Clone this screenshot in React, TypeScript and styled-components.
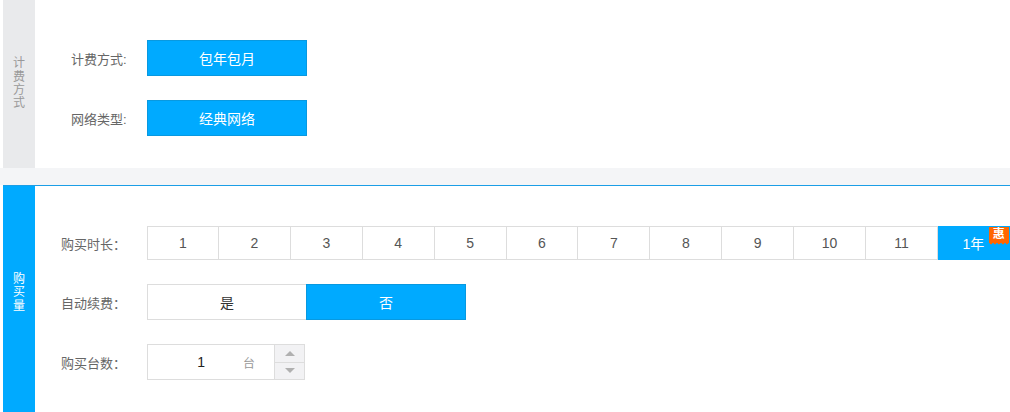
import React from 'react';
import styled, { createGlobalStyle } from 'styled-components';

const GlobalStyle = createGlobalStyle`
  html, body {
    margin: 0;
    padding: 0;
    background: #fff;
  }
  body {
    font-family: "Liberation Sans", "Noto Sans CJK SC", sans-serif;
    color: #666;
  }
`;

const months = ['1', '2', '3', '4', '5', '6', '7', '8', '9', '10', '11'];

const App = () => {
  return (
    <Page>
      <GlobalStyle />
      <Section>
        <Sidebar tone="gray">
          <SideText>计费方式</SideText>
        </Sidebar>
        <Body pad="40px 0 32px 36px">
          <Row>
            <Label>计费方式:</Label>
            <PrimaryButton>包年包月</PrimaryButton>
          </Row>
          <Row>
            <Label>网络类型:</Label>
            <PrimaryButton>经典网络</PrimaryButton>
          </Row>
        </Body>
      </Section>

      <Band />

      <Section accent>
        <Sidebar tone="blue">
          <SideText offset={87}>购买量</SideText>
        </Sidebar>
        <Body pad="40px 0 32px 26px">
          <Row>
            <Label wide>购买时长：</Label>
            <CellGroup>
              {months.map((m) => (
                <Cell key={m}>{m}</Cell>
              ))}
              <Cell active>
                1年
                <Badge>惠</Badge>
              </Cell>
            </CellGroup>
          </Row>
          <Row>
            <Label wide>自动续费：</Label>
            <CellGroup>
              <Toggle>是</Toggle>
              <Toggle active>否</Toggle>
            </CellGroup>
          </Row>
          <Row>
            <Label wide>购买台数：</Label>
            <InputBox>
              <Value>1</Value>
              <Unit>台</Unit>
              <Spinner>
                <SpinHalf>
                  <Arrow dir="up" />
                </SpinHalf>
                <SpinHalf>
                  <Arrow dir="down" />
                </SpinHalf>
              </Spinner>
            </InputBox>
          </Row>
        </Body>
      </Section>
    </Page>
  );
};

const Page = styled.div`
  width: 1010px;
  height: 412px;
  overflow: hidden;
`;

const Section = styled.div<{ accent?: boolean }>`
  display: flex;
  margin-left: 3px;
  border-top: ${(p) => (p.accent ? '1px solid #1b9ee6' : 'none')};
  min-height: ${(p) => (p.accent ? '240px' : '0')};
`;

const Sidebar = styled.div<{ tone: 'gray' | 'blue' }>`
  width: 32px;
  flex-shrink: 0;
  display: flex;
  justify-content: center;
  background: ${(p) => (p.tone === 'blue' ? '#00aaff' : '#e9eaec')};
  color: ${(p) => (p.tone === 'blue' ? '#fff' : '#999')};
`;

const SideText = styled.div<{ offset?: number }>`
  width: 12px;
  font-size: 12px;
  line-height: 13.3px;
  word-break: break-all;
  text-align: center;
  align-self: ${(p) => (p.offset ? 'flex-start' : 'center')};
  margin-top: ${(p) => (p.offset ? `${p.offset}px` : '0')};
`;

const Body = styled.div<{ pad: string }>`
  flex: 1;
  display: flex;
  flex-direction: column;
  gap: 24px;
  padding: ${(p) => p.pad};
`;

const Row = styled.div`
  display: flex;
  align-items: center;
`;

const Label = styled.div<{ wide?: boolean }>`
  width: ${(p) => (p.wide ? '86px' : '76px')};
  font-size: 13px;
  color: #666;
  white-space: nowrap;
`;

const PrimaryButton = styled.div`
  box-sizing: border-box;
  width: 160px;
  height: 36px;
  display: flex;
  align-items: center;
  justify-content: center;
  background: #00aaff;
  border: 1px solid #0899e0;
  color: #fff;
  font-size: 14px;
`;

const Band = styled.div`
  height: 17px;
  background: #f4f5f7;
`;

const CellGroup = styled.div`
  display: flex;
`;

const Cell = styled.div<{ active?: boolean }>`
  position: relative;
  box-sizing: border-box;
  width: 71.9px;
  height: 34px;
  display: flex;
  align-items: center;
  justify-content: center;
  font-size: 14px;
  color: ${(p) => (p.active ? '#fff' : '#555')};
  background: ${(p) => (p.active ? '#00aaff' : '#fff')};
  border: 1px solid ${(p) => (p.active ? '#00aaff' : '#ddd')};
  border-left: none;
  &:first-child {
    width: 72px;
    border-left: 1px solid #ddd;
  }
`;

const Badge = styled.span`
  position: absolute;
  top: 0;
  right: 0;
  width: 20px;
  height: 16px;
  background: #ff6600;
  color: #fff;
  font-size: 12px;
  line-height: 15px;
  text-align: center;
  font-weight: bold;
  &::after {
    content: '';
    position: absolute;
    left: 0;
    right: 0;
    bottom: -2px;
    height: 2px;
    background: radial-gradient(circle at 2px 0, #ff6600 1.5px, transparent 1.6px) 0 0 / 4px 2px repeat-x;
  }
`;

const Toggle = styled.div<{ active?: boolean }>`
  box-sizing: border-box;
  width: 160px;
  height: 36px;
  display: flex;
  align-items: center;
  justify-content: center;
  font-size: 14px;
  color: ${(p) => (p.active ? '#fff' : '#333')};
  background: ${(p) => (p.active ? '#00aaff' : '#fff')};
  border: 1px solid ${(p) => (p.active ? '#0899e0' : '#ddd')};
  & + & {
    margin-left: -1px;
  }
`;

const InputBox = styled.div`
  box-sizing: border-box;
  width: 158px;
  height: 36px;
  display: flex;
  align-items: center;
  border: 1px solid #ddd;
`;

const Value = styled.span`
  width: 57px;
  text-align: right;
  font-size: 14px;
  color: #222;
`;

const Unit = styled.span`
  margin-left: 38px;
  font-size: 12px;
  color: #999;
`;

const Spinner = styled.div`
  margin-left: auto;
  width: 29px;
  height: 100%;
  display: flex;
  flex-direction: column;
  border-left: 1px solid #ddd;
`;

const SpinHalf = styled.div`
  flex: 1;
  display: flex;
  align-items: center;
  justify-content: center;
  background: #f2f2f4;
  & + & {
    border-top: 1px solid #ddd;
  }
`;

const Arrow = styled.span<{ dir: 'up' | 'down' }>`
  width: 0;
  height: 0;
  border-left: 5px solid transparent;
  border-right: 5px solid transparent;
  ${(p) => (p.dir === 'up' ? 'border-bottom: 5px solid #b0b0b0;' : 'border-top: 5px solid #b0b0b0;')}
`;

export default App;
